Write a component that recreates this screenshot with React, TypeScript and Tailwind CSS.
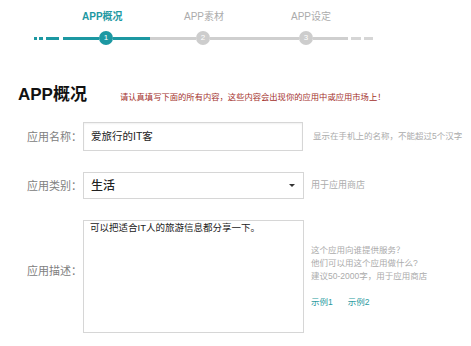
import React from "react";

const font = { fontFamily: '"Liberation Sans","Noto Sans CJK SC",sans-serif' };

function Circle({ n, active }: { n: number; active?: boolean }) {
  return (
    <span
      className={
        "w-[14px] h-[14px] rounded-full flex items-center justify-center text-white text-[8px] leading-none shrink-0 " +
        (active ? "bg-[#1c98a2]" : "bg-[#cdcdcd]")
      }
    >
      {n}
    </span>
  );
}

export default function App() {
  return (
    <div className="w-[471px] h-[346px] bg-white overflow-hidden relative" style={font}>
      {/* step labels */}
      <div className="flex pt-[11px] text-[10px] leading-[12px]">
        <span className="ml-[82px] w-[40px] font-bold text-[#1c98a2] whitespace-nowrap">APP概况</span>
        <span className="ml-[62px] w-[40px] text-[#ababab] whitespace-nowrap">APP素材</span>
        <span className="ml-[67px] w-[40px] text-[#ababab] whitespace-nowrap">APP设定</span>
      </div>
      {/* step line */}
      <div className="flex items-center pl-[34px] mt-[8px] h-[14px]">
        <span className="w-[3px] h-[3px] bg-[#1c98a2]" />
        <span className="ml-[2px] w-[4px] h-[3px] bg-[#1c98a2]" />
        <span className="ml-[3px] w-[13px] h-[3px] bg-[#1c98a2]" />
        <span className="ml-[4px] w-[36px] h-[3px] bg-[#1c98a2]" />
        <Circle n={1} active />
        <span className="w-[37px] h-[3px] bg-[#1c98a2]" />
        <span className="w-[46px] h-[3px] bg-[#cfcfcf]" />
        <Circle n={2} />
        <span className="w-[89px] h-[3px] bg-[#cfcfcf]" />
        <Circle n={3} />
        <span className="w-[35px] h-[3px] bg-[#cfcfcf]" />
        <span className="ml-[3px] w-[10px] h-[3px] bg-[#d6d6d6]" />
        <span className="ml-[3px] w-[9px] h-[3px] bg-[#d6d6d6]" />
      </div>

      {/* title */}
      <div className="flex items-end mt-[40px] pl-[18px] h-[20px]">
        <span className="text-[17px] leading-[20px] font-bold text-[#111] whitespace-nowrap">APP概况</span>
        <span className="ml-[33px] mb-[2px] text-[8.3px] leading-[12px] text-[#a3302b] whitespace-nowrap">
          请认真填写下面的所有内容，这些内容会出现你的应用中或应用市场上！
        </span>
      </div>

      {/* row 1 */}
      <div className="flex items-center mt-[17px]">
        <span className="w-[82px] text-right text-[11px] leading-[14px] text-[#808080] whitespace-nowrap">应用名称：</span>
        <div className="ml-[1px] w-[220px] h-[29px] border border-[#d6d6d6] shadow-[inset_0_1px_2px_rgba(0,0,0,0.06)] flex items-center pl-[7px] text-[10.5px] text-[#222] whitespace-nowrap">
          爱旅行的IT客
        </div>
        <span className="ml-[10px] text-[8.5px] text-[#ababab] whitespace-nowrap">显示在手机上的名称，不能超过5个汉字</span>
      </div>

      {/* row 2 */}
      <div className="flex items-center mt-[21px]">
        <span className="w-[82px] text-right text-[11px] leading-[14px] text-[#808080] whitespace-nowrap">应用类别：</span>
        <div className="ml-[1px] w-[221px] h-[27px] border border-[#d6d6d6] flex items-center pl-[7px] pr-[8px] text-[12px] font-medium text-[#222]">
          <span className="flex-1">生活</span>
          <span className="w-0 h-0 border-l-[3px] border-r-[3px] border-t-[3px] border-l-transparent border-r-transparent border-t-[#333]" />
        </div>
        <span className="ml-[7px] text-[9px] text-[#ababab] whitespace-nowrap">用于应用商店</span>
      </div>

      {/* row 3 */}
      <div className="flex items-start mt-[21px]">
        <span className="w-[82px] mt-[44px] text-right text-[11px] leading-[14px] text-[#808080] whitespace-nowrap">应用描述：</span>
        <div className="ml-[1px] w-[221px] h-[113px] border border-[#d6d6d6] pl-[6px] pt-[0px] text-[9.5px] leading-[13px] text-[#222] whitespace-nowrap">
          可以把适合IT人的旅游信息都分享一下。
        </div>
        <div className="ml-[7px] mt-[24px] flex flex-col text-[8.5px] leading-[13px] text-[#ababab] whitespace-nowrap">
          <span>这个应用向谁提供服务？</span>
          <span>他们可以用这个应用做什么?</span>
          <span>建议50-2000字，用于应用商店</span>
          <div className="flex mt-[13px] text-[#2a9aa0]">
            <span>示例1</span>
            <span className="ml-[15px]">示例2</span>
          </div>
        </div>
      </div>
    </div>
  );
}
